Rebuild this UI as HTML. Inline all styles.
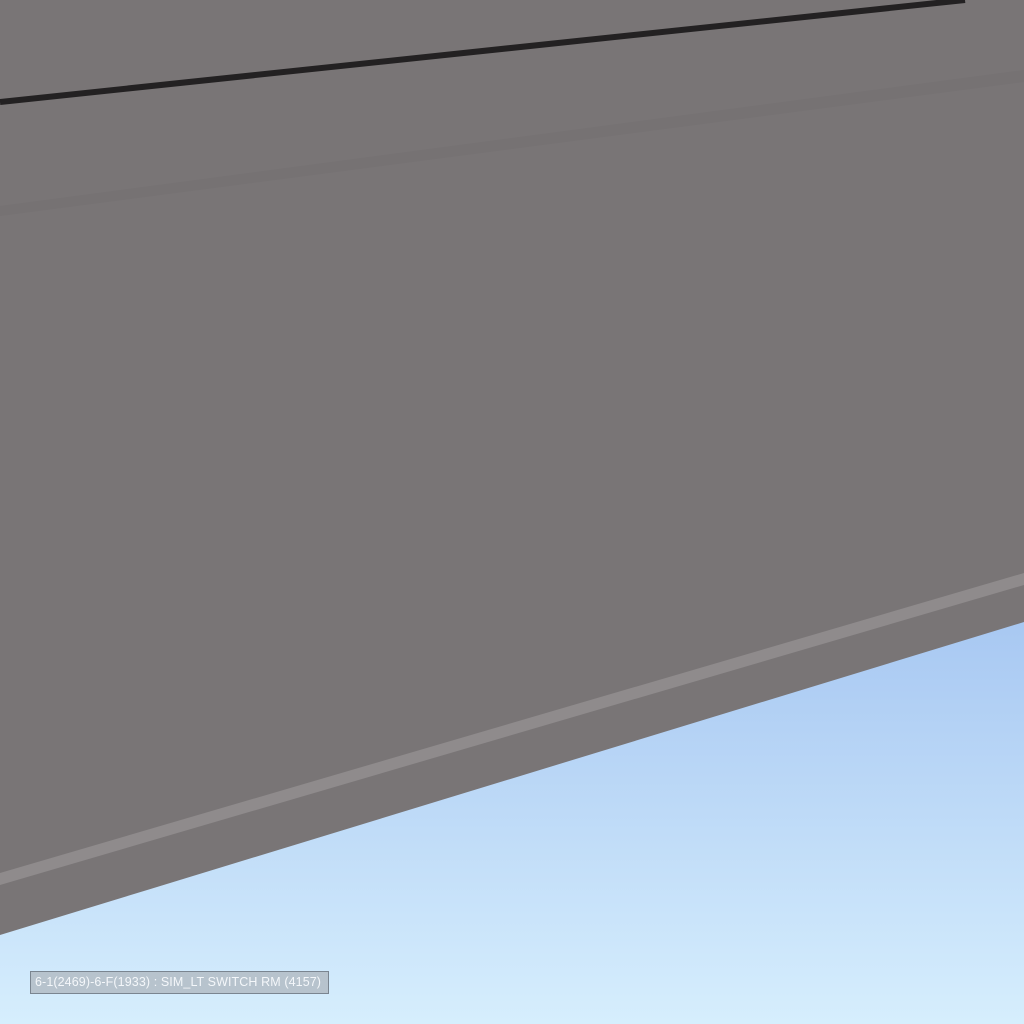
<!DOCTYPE html>
<html><head><style>
html,body{margin:0;padding:0;width:1024px;height:1024px;overflow:hidden;background:#797576}
.lbl{position:absolute;left:30px;top:971px;width:299px;height:23px;box-sizing:border-box;border:1px solid #7a8590;background:#b7c3cd;color:#f4f7fa;font-family:"Liberation Sans",sans-serif;font-size:12.5px;letter-spacing:0.1px;line-height:21px;padding-left:4px;white-space:nowrap}
</style></head><body>
<svg width="1024" height="1024" style="position:absolute;left:0;top:0">
<defs><linearGradient id="sky" x1="0" y1="0" x2="0" y2="1" gradientUnits="objectBoundingBox">
<stop offset="0" stop-color="#a8c8f2"/><stop offset="1" stop-color="#d6eefd"/></linearGradient></defs>
<rect width="1024" height="1024" fill="#797576"/>
<polygon points="0,206 1024,70 1024,82 0,216" fill="#767273"/>
<line x1="0" y1="102" x2="965" y2="0" stroke="#232122" stroke-width="6"/>
<polygon points="0,935 1024,622 1024,1024 0,1024" fill="url(#sky)"/>
<polygon points="0,873 1024,573 1024,585 0,885" fill="#8f8b8c"/>
</svg>
<div class="lbl">6-1(2469)-6-F(1933) : SIM_LT SWITCH RM (4157)</div>
</body></html>
